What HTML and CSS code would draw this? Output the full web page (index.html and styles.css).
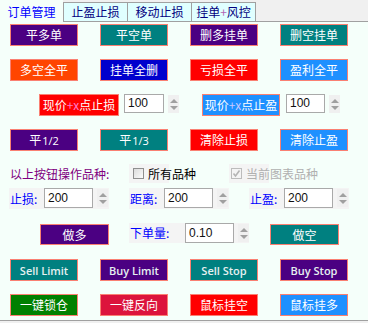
FILE: index.html
```html
<!DOCTYPE html>
<html lang="zh">

<head>
    <meta charset="utf-8">
    <title>订单管理</title>
    <link rel="stylesheet" href="styles.css">
</head>

<body>
    <div class="tabs">
        <div class="tab active">订单管理</div>
        <div class="tab">止盈止损</div>
        <div class="tab">移动止损</div>
        <div class="tab last">挂单<span class="tab-plus">+</span>风控</div>
    </div>

    <div class="panel">
        <!-- close / delete -->
        <div class="row r1">
            <div class="btn indigo">平多单</div>
            <div class="btn teal">平空单</div>
            <div class="btn indigo">删多挂单</div>
            <div class="btn teal">删空挂单</div>
        </div>

        <div class="row r2">
            <div class="btn orange">多空全平</div>
            <div class="btn blue">挂单全删</div>
            <div class="btn red">亏损全平</div>
            <div class="btn sky">盈利全平</div>
        </div>

        <!-- price + x points -->
        <div class="row r3">
            <div class="btn red wide">现价<span class="px-sl">+x</span>点止损</div>
            <div class="num small">100</div>
            <div class="spin"><i class="up"></i><i class="down"></i></div>
            <div class="btn sky wide second">现价<span class="px-tp">+x</span>点止盈</div>
            <div class="num small right">100</div>
            <div class="spin"><i class="up"></i><i class="down"></i></div>
        </div>

        <div class="row r4">
            <div class="btn indigo">平<span class="latin">1/2</span></div>
            <div class="btn teal">平<span class="latin">1/3</span></div>
            <div class="btn red">清除止损</div>
            <div class="btn sky">清除止盈</div>
        </div>

        <!-- symbol scope -->
        <div class="row r5">
            <div class="scope-label">以上按钮操作品种:</div>
            <div class="check">
                <span class="box"></span>
                <span class="check-text">所有品种</span>
            </div>
            <div class="check disabled">
                <span class="box">
                    <svg width="9" height="9" viewBox="0 0 9 9"><path d="M1.5 4.5 L3.5 7 L7.5 1.5" fill="none" stroke="#b4b4b4" stroke-width="1.6"/></svg>
                </span>
                <span class="check-text">当前图表品种</span>
            </div>
        </div>

        <div class="row r6">
            <div class="field">
                <span class="field-label">止损:</span>
                <div class="num">200</div>
                <div class="spin"><i class="up"></i><i class="down"></i></div>
            </div>
            <div class="field">
                <span class="field-label">距离:</span>
                <div class="num">200</div>
                <div class="spin"><i class="up"></i><i class="down"></i></div>
            </div>
            <div class="field">
                <span class="field-label">止盈:</span>
                <div class="num">200</div>
                <div class="spin"><i class="up"></i><i class="down"></i></div>
            </div>
        </div>

        <div class="row r7">
            <div class="btn indigo trade">做多</div>
            <div class="field lots">
                <span class="field-label">下单量:</span>
                <div class="num">0.10</div>
                <div class="spin"><i class="up"></i><i class="down"></i></div>
            </div>
            <div class="btn teal trade">做空</div>
        </div>

        <!-- pending orders -->
        <div class="row r8">
            <div class="btn teal latin-btn">Sell Limit</div>
            <div class="btn indigo latin-btn">Buy Limit</div>
            <div class="btn teal latin-btn">Sell Stop</div>
            <div class="btn indigo latin-btn">Buy Stop</div>
        </div>

        <div class="row r9">
            <div class="btn green">一键锁仓</div>
            <div class="btn crimson">一键反向</div>
            <div class="btn red">鼠标挂空</div>
            <div class="btn sky">鼠标挂多</div>
        </div>
    </div>
</body>

</html>
```

FILE: styles.css
```css
body {
    margin: 0;
    width: 368px;
    height: 323px;
    overflow: hidden;
    background-color: #f0f0f0;
    font-family: "Noto Sans CJK SC", sans-serif;
    font-size: 12px;
}

.tabs {
    display: flex;
    align-items: flex-end;
    height: 21px;
    border-bottom: 1px solid #a0a0a0;
    background-color: #f0f0f0;
}

.tab {
    box-sizing: border-box;
    width: 64px;
    height: 19px;
    line-height: 18px;
    text-align: center;
    color: #000080;
    background-color: #e0ffff;
    border-top: 1px solid #a0a0a0;
    border-left: 1px solid #a0a0a0;
}

.tab.last {
    width: 65px;
    border-right: 1px solid #a0a0a0;
}

.tab.active {
    width: 63px;
    height: 22px;
    line-height: 24px;
    margin-bottom: -1px;
    border: none;
    color: #0000ff;
    background-color: #f5fffa;
}

.tab-plus {
    color: #b464b4;
}

.panel {
    height: 298px;
    background-color: #f5fffa;
    border-bottom: 1px solid #a0a0a0;
    display: flex;
    flex-direction: column;
}

.row {
    display: flex;
    align-items: flex-start;
}

.r1 { margin-top: 2px; padding-left: 10px; gap: 22px; }
.r2 { margin-top: 13px; padding-left: 10px; gap: 22px; }
.r3 { margin-top: 13px; padding-left: 39px; }
.r4 { margin-top: 13px; padding-left: 10px; gap: 22px; }
.r5 { margin-top: 13px; height: 19px; padding-left: 10px; align-items: center; }
.r6 { margin-top: 5px; padding-left: 9px; gap: 20px; }
.r7 { margin-top: 15px; padding-left: 40px; }
.r8 { margin-top: 14px; padding-left: 10px; gap: 22px; }
.r9 { margin-top: 13px; padding-left: 10px; gap: 22px; }

/* buttons */
.btn {
    box-sizing: border-box;
    width: 68px;
    height: 22px;
    border: 1px solid #fa8072;
    color: #ffffff;
    display: flex;
    justify-content: center;
    align-items: center;
    line-height: 1;
    white-space: nowrap;
}

.btn.wide {
    width: 80px;
}

.btn.wide.second {
    width: 78px;
    margin-left: 23px;
}

.btn.trade {
    width: 69px;
    height: 21px;
}

.indigo { background-color: #4b0082; }
.teal { background-color: #008080; }
.orange { background-color: #ff4500; }
.blue { background-color: #0000cd; }
.red { background-color: #ff0000; }
.sky { background-color: #1e90ff; }
.green { background-color: #008000; }
.crimson { background-color: #dc143c; }

.px-sl {
    color: #ff7ad0;
}

.px-tp {
    color: #c8c8ff;
}

.latin {
    font-family: "Open Sans", sans-serif;
    font-size: 11px;
    margin-left: 1px;
}

.latin-btn {
    font-family: "Open Sans", sans-serif;
    font-size: 11px;
    font-weight: 600;
    color: #e6f0f0;
}

/* numeric up-down */
.num {
    box-sizing: border-box;
    width: 49px;
    height: 20px;
    padding-left: 3px;
    border: 1px solid #a9a9a9;
    background-color: #ffffff;
    font-family: "Liberation Sans", sans-serif;
    font-size: 12px;
    line-height: 18px;
    color: #101010;
}

.num.small {
    width: 40px;
    height: 19px;
    margin-left: 5px;
    line-height: 17px;
}

.num.small.right {
    width: 39px;
    margin-left: 6px;
}

.spin {
    width: 11px;
    height: 18px;
    margin-left: 4px;
    margin-top: 1px;
    background-color: #f0f0f0;
    display: flex;
    flex-direction: column;
    justify-content: center;
    align-items: center;
    gap: 3px;

    i {
        width: 0;
        height: 0;
        border-left: 4px solid transparent;
        border-right: 4px solid transparent;
    }

    .up {
        border-bottom: 4px solid #a0a0a0;
    }

    .down {
        border-top: 4px solid #a0a0a0;
    }
}

.field {
    width: 100px;
    height: 21px;
    display: flex;
    align-items: flex-start;
    background-color: #f4f4f4;

    .field-label {
        width: 35px;
        padding-left: 1px;
        box-sizing: border-box;
        line-height: 21px;
        color: #0000ff;
    }
}

.field.lots {
    width: 120px;
    height: 20px;
    margin-top: -1px;
    margin-left: 20px;
    margin-right: 21px;

    .field-label {
        width: 56px;
        line-height: 20px;
    }
}

/* checkboxes */
.scope-label {
    width: 119px;
    color: #800080;
}

.check {
    display: flex;
    align-items: center;
    width: 100px;
    height: 19px;
    background: linear-gradient(to right, #f4f4f4 40px, transparent 40px);

    .box {
        box-sizing: border-box;
        width: 11px;
        height: 11px;
        margin-left: 4px;
        border: 1px solid #8f8f8f;
        background: linear-gradient(135deg, #dcdcdc, #fbfbfb);
        display: flex;
        justify-content: center;
        align-items: center;
    }

    .check-text {
        margin-left: 4px;
        color: #000000;
    }
}

.check.disabled {
    .box {
        border-color: #bcbcbc;
        background: #f4f4f4;
        margin-left: 2px;
    }

    .check-text {
        color: #b0b0b0;
    }
}
```
